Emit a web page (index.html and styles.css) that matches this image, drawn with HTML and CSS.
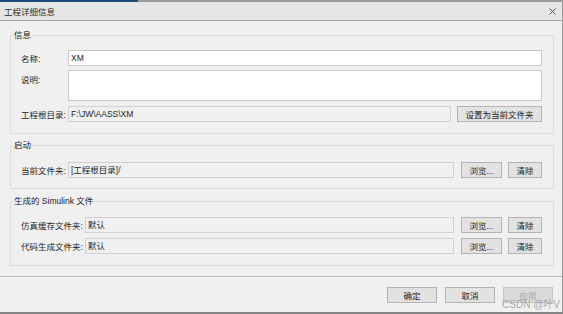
FILE: index.html
```html
<!DOCTYPE html>
<html lang="zh-CN">
<head>
  <meta charset="UTF-8">
  <title>工程详细信息</title>
  <link rel="stylesheet" href="styles.css">
</head>
<body>

  <div class="taskbar"><span class="task-active"></span></div>

  <div class="dialog">
    <div class="titlebar">
      <span class="title">工程详细信息</span>
      <svg class="close" width="7" height="7" viewBox="0 0 7 7">
        <path d="M0.5 0.5 L6.5 6.5 M6.5 0.5 L0.5 6.5" stroke="#555" stroke-width="1" fill="none"/>
      </svg>
    </div>

    <div class="content">
      <fieldset class="group group-info">
        <legend>信息</legend>
        <div class="row">
          <span class="label">名称:</span>
          <div class="field">XM</div>
        </div>
        <div class="row row-tall">
          <span class="label label-top">说明:</span>
          <div class="field field-tall"></div>
        </div>
        <div class="row row-last">
          <span class="label">工程根目录:</span>
          <div class="field field-off">F:\JW\AASS\XM</div>
          <button class="btn btn-wide">设置为当前文件夹</button>
        </div>
      </fieldset>

      <fieldset class="group group-start">
        <legend>启动</legend>
        <div class="row">
          <span class="label">当前文件夹:</span>
          <div class="field field-off">[工程根目录]/</div>
          <button class="btn btn-browse">浏览...</button>
          <button class="btn btn-clear">清除</button>
        </div>
      </fieldset>

      <fieldset class="group group-files">
        <legend>生成的 Simulink 文件</legend>
        <div class="row">
          <span class="label label-long">仿真缓存文件夹:</span>
          <div class="field field-off">默认</div>
          <button class="btn btn-browse">浏览...</button>
          <button class="btn btn-clear">清除</button>
        </div>
        <div class="row row-next">
          <span class="label label-long">代码生成文件夹:</span>
          <div class="field field-off">默认</div>
          <button class="btn btn-browse">浏览...</button>
          <button class="btn btn-clear">清除</button>
        </div>
      </fieldset>
    </div>

    <div class="separator"></div>

    <div class="footer">
      <button class="btn btn-footer">确定</button>
      <button class="btn btn-footer">取消</button>
      <button class="btn btn-footer btn-disabled">应用</button>
      <span class="watermark">CSDN @叶V</span>
    </div>
  </div>

  <div class="bottombar"></div>

</body>
</html>
```

FILE: styles.css
```css
body {
  margin: 0;
  width: 563px;
  height: 314px;
  overflow: hidden;
  background: #f0f0f0;
  font-family: "Liberation Sans", "Noto Sans CJK SC", sans-serif;
  font-size: 8.5px;
  color: #1e1e1e;
}

.taskbar {
  height: 2px;
  background: #9c9c9c;
  display: flex;
}

.task-active {
  width: 138px;
  background: #1d4b7c;
}

.dialog {
  height: 310px;
  border-right: 1px solid #9a9a9a;
  display: flex;
  flex-direction: column;
}

.titlebar {
  height: 18px;
  border-bottom: 1px solid #a4a4a4;
  background: #e6e6e6;
  display: flex;
  align-items: center;
  justify-content: space-between;
  padding: 0 6px 0 4px;
}

.title {
  color: #2a2a2a;
}

.content {
  padding: 8px 8px 10px 10px;
  display: flex;
  flex-direction: column;
}

.group {
  margin: 0;
  border: 1px solid #dcdcdc;
  padding: 0 11px 11px 2px;
  min-width: 0;
}

.group legend {
  padding: 0 1px;
  line-height: 12px;
  color: #222;
}

.group-info {
  padding-top: 9px;
}

.group-start {
  margin-top: 5px;
  padding-top: 11px;
  padding-bottom: 10px;
}

.group-files {
  margin-top: 6px;
  padding-top: 10px;
}

.row {
  display: flex;
  align-items: center;
  height: 16px;
  padding-left: 8px;
}

.row-tall {
  height: 31px;
  margin-top: 4px;
  align-items: flex-start;
}

.row-last {
  margin-top: 5px;
}

.row-next {
  margin-top: 5px;
}

.label {
  width: 47px;
  flex-shrink: 0;
  white-space: nowrap;
}

.label-top {
  padding-top: 3px;
}

.label-long {
  width: 64px;
}

.field {
  flex: 1;
  height: 16px;
  box-sizing: border-box;
  border: 1px solid #c9c9c9;
  background: #fff;
  padding-left: 2px;
  line-height: 14px;
  white-space: nowrap;
}

.field-tall {
  height: 31px;
}

.field-off {
  background: #f0f0f0;
  border-color: #d0d0d0;
}

.btn {
  height: 16px;
  box-sizing: border-box;
  border: 1px solid #b4b4b4;
  background: #e2e2e2;
  font-family: inherit;
  font-size: 8.5px;
  color: #1e1e1e;
  padding: 0;
  flex-shrink: 0;
}

.btn-wide {
  width: 85px;
  margin-left: 6px;
}

.btn-browse {
  width: 41px;
  margin-left: 7px;
}

.btn-clear {
  width: 34px;
  margin-left: 6px;
}

.separator {
  height: 1px;
  background: #b4b4b4;
  border-bottom: 1px solid #fafafa;
}

.footer {
  position: relative;
  display: flex;
  justify-content: flex-end;
  gap: 8px;
  padding: 9px 9px 0 0;
}

.btn-footer {
  width: 50px;
}

.btn-disabled {
  background: #d9d9d9;
  border-color: #c6c6c6;
  color: #a6a6a6;
}

.watermark {
  position: absolute;
  right: 2px;
  top: 18px;
  font-size: 10px;
  color: rgba(150, 150, 150, 0.8);
  white-space: nowrap;
}

.bottombar {
  height: 2px;
  background: #858585;
}
```
